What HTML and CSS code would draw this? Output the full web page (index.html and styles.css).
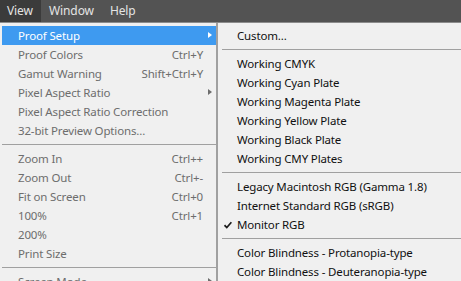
FILE: index.html
```html
<!DOCTYPE html>
<html lang="en">
<head>
    <meta charset="UTF-8">
    <title>View menu</title>
    <link rel="stylesheet" href="styles.css">
</head>
<body>
    <div class="menubar">
        <div class="menubar-item active">View</div>
        <div class="menubar-item">Window</div>
        <div class="menubar-item">Help</div>
    </div>

    <div class="menus">
        <!-- View menu -->
        <div class="menu main">
            <div class="item selected"><span class="label">Proof Setup</span><span class="arrow"></span></div>
            <div class="item"><span class="label">Proof Colors</span><span class="key">Ctrl+Y</span></div>
            <div class="item"><span class="label">Gamut Warning</span><span class="key">Shift+Ctrl+Y</span></div>
            <div class="item"><span class="label">Pixel Aspect Ratio</span><span class="arrow"></span></div>
            <div class="item"><span class="label">Pixel Aspect Ratio Correction</span></div>
            <div class="item"><span class="label">32-bit Preview Options...</span></div>
            <div class="sep"></div>
            <div class="item"><span class="label">Zoom In</span><span class="key">Ctrl++</span></div>
            <div class="item"><span class="label">Zoom Out</span><span class="key">Ctrl+-</span></div>
            <div class="item"><span class="label">Fit on Screen</span><span class="key">Ctrl+0</span></div>
            <div class="item"><span class="label">100%</span><span class="key">Ctrl+1</span></div>
            <div class="item"><span class="label">200%</span></div>
            <div class="item"><span class="label">Print Size</span></div>
            <div class="sep"></div>
            <div class="item"><span class="label">Screen Mode</span><span class="arrow"></span></div>
        </div>

        <!-- Proof Setup submenu -->
        <div class="menu sub">
            <div class="item"><span class="label">Custom...</span></div>
            <div class="sep"></div>
            <div class="item"><span class="label">Working CMYK</span></div>
            <div class="item"><span class="label">Working Cyan Plate</span></div>
            <div class="item"><span class="label">Working Magenta Plate</span></div>
            <div class="item"><span class="label">Working Yellow Plate</span></div>
            <div class="item"><span class="label">Working Black Plate</span></div>
            <div class="item"><span class="label">Working CMY Plates</span></div>
            <div class="sep"></div>
            <div class="item"><span class="label">Legacy Macintosh RGB (Gamma 1.8)</span></div>
            <div class="item"><span class="label">Internet Standard RGB (sRGB)</span></div>
            <div class="item checked">
                <svg class="check" width="8" height="8" viewBox="0 0 8 8"><path d="M0.5 4.2 L2.8 6.6 L7.4 1.2" fill="none" stroke="#1a1a1a" stroke-width="1.7"/></svg>
                <span class="label">Monitor RGB</span>
            </div>
            <div class="sep"></div>
            <div class="item"><span class="label">Color Blindness - Protanopia-type</span></div>
            <div class="item"><span class="label">Color Blindness - Deuteranopia-type</span></div>
        </div>
    </div>
</body>
</html>
```

FILE: styles.css
```css
:root {
    --bar-color: #535353;
    --menu-bg: #f0f0f0;
    --border-color: #a0a0a0;
    --highlight: #3e9af0;
    --disabled: #6d6d6d;
}

html, body {
    margin: 0;
    padding: 0;
    width: 461px;
    height: 281px;
    overflow: hidden;
    background: var(--menu-bg);
    font-family: 'Noto Sans', 'Liberation Sans', sans-serif;
    font-size: 11.5px;
    letter-spacing: -0.15px;
}

.menubar {
    height: 22px;
    background: var(--bar-color);
    display: flex;
    border-bottom: 1px solid #8c8c8c;
}

.menubar-item {
    color: #e4e4e4;
    font-size: 12px;
    letter-spacing: -0.1px;
    line-height: 22px;
    padding: 0 8px;
}

.menubar-item.active {
    background: #3b3b3b;
    width: 41px;
    box-sizing: border-box;
    padding: 0 0 0 7px;
}

.menus {
    display: flex;
    align-items: flex-start;
}

.menu {
    box-sizing: border-box;
    padding-top: 3px;
    background: var(--menu-bg);
}

.menu.main {
    width: 217px;
    border-right: 1px solid var(--border-color);
    padding-left: 2px;
}

.menu.sub {
    flex: 1;
    border-left: 1px solid var(--border-color);
    padding-left: 3px;
}

.item {
    height: 19px;
    display: flex;
    align-items: center;
    position: relative;
    white-space: nowrap;
}

.main .item {
    color: var(--disabled);
    padding: 0 13px 0 16px;
}

.main .item.selected {
    background: var(--highlight);
    color: #fff;
}

.sub .item {
    color: #111;
    padding-left: 16px;
}

.label {
    flex: 1;
}

.key {
    text-align: right;
}

.arrow {
    position: absolute;
    right: 4px;
    top: 6px;
    width: 0;
    height: 0;
    border-top: 3.5px solid transparent;
    border-bottom: 3.5px solid transparent;
    border-left: 4px solid var(--disabled);
}

.selected .arrow {
    border-left-color: #fff;
}

.check {
    position: absolute;
    left: 3px;
    top: 6px;
}

.sep {
    height: 9px;
    display: flex;
    align-items: center;
}

.sep::after {
    content: "";
    flex: 1;
    height: 1px;
    background: var(--border-color);
}

.sub .sep {
    padding-left: 1px;
}
```
